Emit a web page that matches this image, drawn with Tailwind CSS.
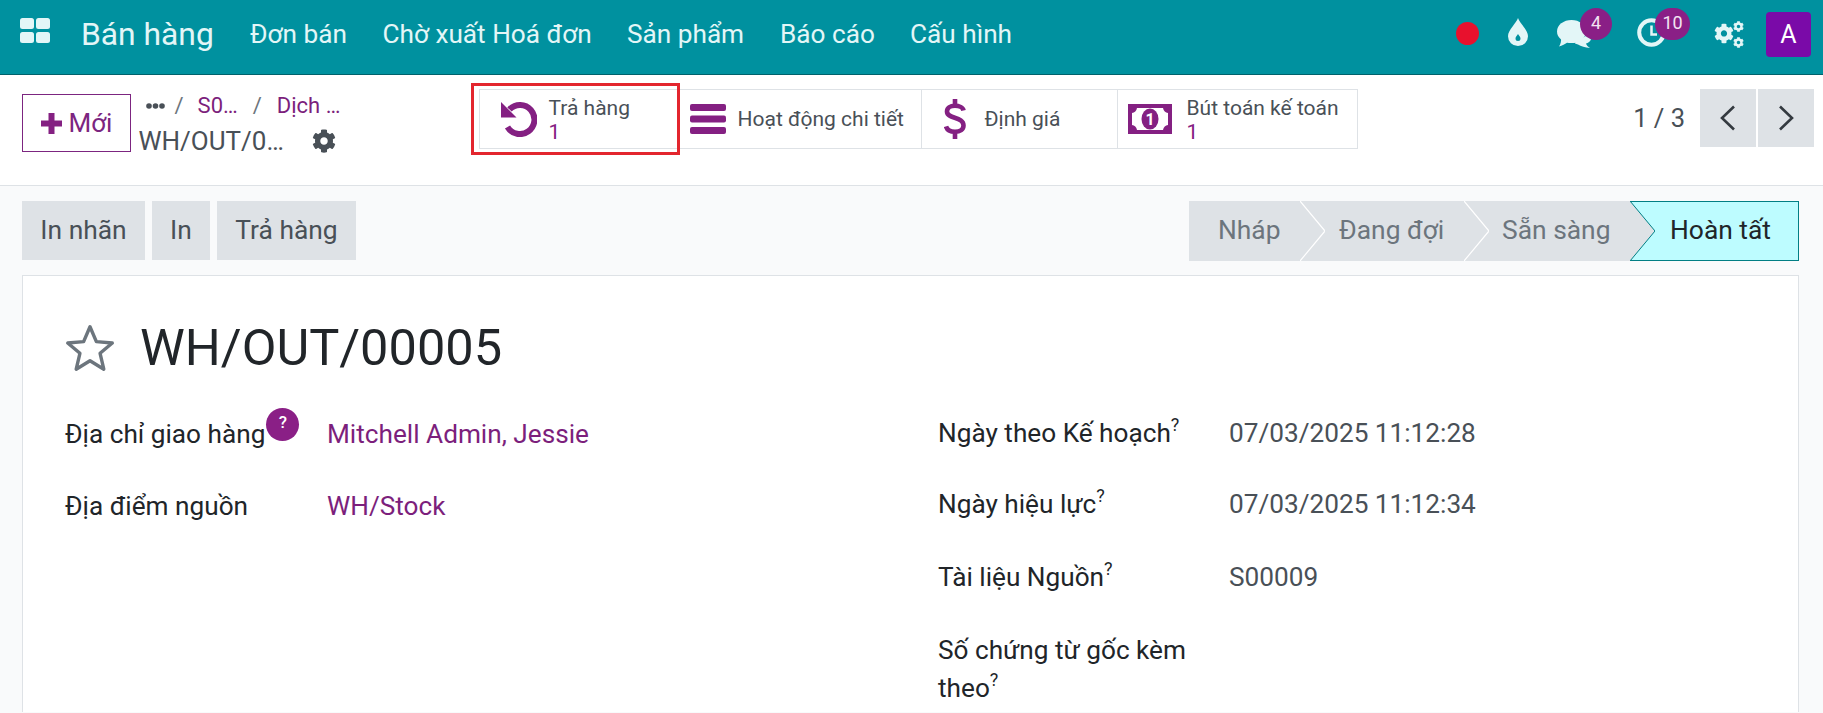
<!DOCTYPE html>
<html lang="vi">
<head>
<meta charset="utf-8">
<script src="https://cdn.jsdelivr.net/npm/@tailwindcss/browser@4"></script>
</head>
<body class="w-[1823px] h-[713px] overflow-hidden bg-[#f9fafb] font-['Roboto',sans-serif] text-[#212529]">
<!-- navbar -->
<header class="relative flex items-center h-[75px] bg-[#00919f] border-b border-[#00616b] text-[#e3f6f7]">
  <svg class="ml-[20px] w-[30px] h-[25px] mb-[13px]" viewBox="0 0 30 25" fill="#e3f6f7"><rect x="0" y="0" width="14" height="11" rx="2.5"/><rect x="16" y="0" width="14" height="11" rx="2.5"/><rect x="0" y="14" width="14" height="11" rx="2.5"/><rect x="16" y="14" width="14" height="11" rx="2.5"/></svg>
  <span class="ml-[31px] text-[31.800px] w-[169px] mb-[4px]">Bán hàng</span>
  <nav class="flex text-[26.200px] mb-[4px]">
    <span class="w-[132.5px]">Đơn bán</span>
    <span class="w-[244.5px]">Chờ xuất Hoá đơn</span>
    <span class="w-[153px]">Sản phẩm</span>
    <span class="w-[130px]">Báo cáo</span>
    <span>Cấu hình</span>
  </nav>
  <div class="absolute left-[1455.5px] top-[21.5px] w-[23px] h-[23px] rounded-full bg-[#e8112d]"></div>
  <svg class="absolute left-[1508px] top-[18px] w-[20px] h-[28px]" viewBox="0 0 20 28"><path fill="#e3f6f7" fill-rule="evenodd" d="M10 0C11.500 5 20 12 20 18.200A10 9.800 0 0 1 0 18.200C0 12 8.500 5 10 0ZM10 16C8.500 18 7.500 19.300 7.500 20.500A2.500 2.500 0 0 0 12.500 20.500C12.500 19.300 11.500 18 10 16Z"/></svg>
  <svg class="absolute left-[1557px] top-[20px] w-[34px] h-[28px]" viewBox="0 0 34 28" fill="#e3f6f7"><path d="M21 24.500C20 24 19 23.800 18 23.500L19 19C25 19 30 16 31 13C33 15 34 17 34 19C33.500 21.500 31 23 29 23.500C29.500 25 31 27 33 28C28 27.500 24 26.500 21 24.500Z"/><ellipse cx="14.500" cy="11.500" rx="14.500" ry="11.500"/><path d="M4 17L11 22C8 24 5 26 2 26.500C3.500 24.500 4.500 21 4 17Z"/></svg>
  <span class="absolute left-[1580px] top-[8px] w-[32px] h-[32px] rounded-full bg-[#8a1f86] text-[#f3e3f2] text-[18px] flex items-center justify-center pb-[3px]">4</span>
  <svg class="absolute left-[1637px] top-[18px] w-[29px] h-[29px]" viewBox="0 0 29 29" fill="none" stroke="#e3f6f7"><circle cx="14.500" cy="14.500" r="12.300" stroke-width="4"/><path d="M14.500 7.500V16.500H20" stroke-width="2.500"/></svg>
  <span class="absolute left-[1655px] top-[8px] w-[35px] h-[32px] rounded-full bg-[#8a1f86] text-[#f3e3f2] text-[18px] flex items-center justify-center pb-[3px]">10</span>
  <svg class="absolute left-[1714px] top-[21px] w-[30px] h-[27px]" viewBox="0 0 30 27" fill="#e3f6f7">
    <g transform="translate(0 2.500) scale(0.039)"><path fill-rule="evenodd" d="M487.400 315.700l-42.600-24.600c4.300-23.200 4.300-47 0-70.200l42.600-24.600c4.900-2.800 7.100-8.600 5.500-14-11.100-35.600-30-67.800-54.700-94.600-3.800-4.100-10-5.100-14.800-2.300L380.800 110c-17.900-15.400-38.500-27.300-60.800-35.100V25.800c0-5.600-3.900-10.500-9.400-11.700-36.700-8.200-74.300-7.800-109.200 0-5.500 1.200-9.400 6.100-9.400 11.700V75c-22.200 7.900-42.800 19.800-60.800 35.100L88.700 85.500c-4.900-2.800-11-1.900-14.800 2.300-24.700 26.700-43.600 58.900-54.700 94.600-1.700 5.400.6 11.200 5.500 14L67.300 221c-4.300 23.200-4.300 47 0 70.200l-42.600 24.600c-4.900 2.800-7.100 8.600-5.500 14 11.100 35.600 30 67.800 54.700 94.600 3.800 4.100 10 5.100 14.800 2.300l42.600-24.600c17.900 15.400 38.500 27.300 60.800 35.100v49.200c0 5.600 3.900 10.500 9.400 11.700 36.700 8.200 74.300 7.800 109.200 0 5.500-1.200 9.400-6.100 9.400-11.700v-49.200c22.200-7.900 42.800-19.800 60.800-35.100l42.600 24.600c4.900 2.800 11 1.900 14.800-2.300 24.700-26.700 43.600-58.900 54.700-94.600 1.500-5.500-.7-11.300-5.600-14.100zM256 336c-44.100 0-80-35.900-80-80s35.900-80 80-80 80 35.900 80 80-35.900 80-80 80z"/></g>
    <g transform="translate(19 0) scale(0.0215)"><path fill-rule="evenodd" d="M487.400 315.700l-42.600-24.600c4.300-23.200 4.300-47 0-70.200l42.600-24.600c4.900-2.800 7.100-8.600 5.500-14-11.100-35.600-30-67.800-54.700-94.600-3.800-4.100-10-5.100-14.800-2.300L380.800 110c-17.900-15.400-38.500-27.300-60.800-35.100V25.800c0-5.600-3.900-10.500-9.400-11.700-36.700-8.200-74.300-7.800-109.200 0-5.500 1.200-9.400 6.100-9.400 11.700V75c-22.200 7.900-42.800 19.800-60.800 35.100L88.700 85.500c-4.900-2.800-11-1.900-14.800 2.300-24.700 26.700-43.600 58.900-54.700 94.600-1.700 5.400.6 11.200 5.500 14L67.300 221c-4.300 23.200-4.300 47 0 70.200l-42.600 24.600c-4.900 2.800-7.100 8.600-5.500 14 11.100 35.600 30 67.800 54.700 94.600 3.800 4.100 10 5.100 14.800 2.300l42.600-24.600c17.900 15.400 38.500 27.300 60.800 35.100v49.200c0 5.600 3.900 10.500 9.400 11.700 36.700 8.200 74.300 7.800 109.200 0 5.500-1.200 9.400-6.100 9.400-11.700v-49.200c22.200-7.900 42.800-19.800 60.800-35.100l42.600 24.600c4.900 2.800 11 1.900 14.800-2.300 24.700-26.700 43.600-58.900 54.700-94.600 1.500-5.500-.7-11.300-5.600-14.100zM256 336c-44.100 0-80-35.900-80-80s35.900-80 80-80 80 35.900 80 80-35.900 80-80 80z"/></g>
    <g transform="translate(19 16) scale(0.0215)"><path fill-rule="evenodd" d="M487.400 315.700l-42.600-24.600c4.300-23.200 4.300-47 0-70.200l42.600-24.600c4.900-2.800 7.100-8.600 5.500-14-11.100-35.600-30-67.800-54.700-94.600-3.800-4.100-10-5.100-14.800-2.300L380.800 110c-17.900-15.400-38.500-27.300-60.800-35.100V25.800c0-5.600-3.900-10.500-9.400-11.700-36.700-8.200-74.300-7.800-109.200 0-5.500 1.200-9.400 6.100-9.400 11.700V75c-22.200 7.900-42.800 19.800-60.800 35.100L88.700 85.500c-4.900-2.800-11-1.900-14.800 2.300-24.700 26.700-43.600 58.900-54.700 94.600-1.700 5.400.6 11.200 5.500 14L67.300 221c-4.300 23.200-4.300 47 0 70.200l-42.600 24.600c-4.900 2.800-7.100 8.600-5.500 14 11.100 35.600 30 67.800 54.700 94.600 3.800 4.100 10 5.100 14.800 2.300l42.600-24.600c17.900 15.400 38.500 27.300 60.800 35.100v49.200c0 5.600 3.900 10.500 9.400 11.700 36.700 8.200 74.300 7.800 109.200 0 5.500-1.200 9.400-6.100 9.400-11.700v-49.200c22.200-7.900 42.800-19.800 60.800-35.100l42.600 24.600c4.900 2.800 11 1.900 14.800-2.300 24.700-26.700 43.600-58.900 54.700-94.600 1.500-5.500-.7-11.300-5.600-14.100zM256 336c-44.100 0-80-35.900-80-80s35.900-80 80-80 80 35.900 80 80-35.900 80-80 80z"/></g>
  </svg>
  <span class="absolute left-[1766px] top-[12px] w-[45px] h-[45px] rounded-[4px] bg-[#7a0aa8] text-white text-[25px] flex items-center justify-center">A</span>
</header>

<!-- control panel -->
<section class="relative flex h-[111px] bg-white border-b border-[#dee2e6]">
  <button class="ml-[22px] mt-[19px] w-[109px] h-[58px] border border-[#7c2580] text-[#7c2580] text-[26px] flex items-center justify-center gap-[7px]">
    <svg class="w-[21px] h-[21px]" viewBox="0 0 21 21" fill="#842082"><path d="M8 0H13V8H21V13H13V21H8V13H0V8H8Z" stroke="#842082" stroke-linejoin="round"/></svg>Mới
  </button>
  <div class="ml-[7.500px] w-[340px] pt-[16px] text-[22px] text-[#7c1f7c]">
    <div class="flex items-center h-[28px]">
      <svg class="ml-[7px] w-[19px] h-[6px] mt-[1px]" viewBox="0 0 19 6" fill="#495057"><circle cx="3" cy="3" r="2.800"/><circle cx="9.500" cy="3" r="2.800"/><circle cx="16" cy="3" r="2.800"/></svg>
      <span class="ml-[10px] text-[#6c757d]">/</span>
      <span class="ml-[14px]">S0…</span>
      <span class="ml-[15px] text-[#6c757d]">/</span>
      <span class="ml-[15px]">Dịch …</span>
    </div>
    <div class="flex items-center mt-[5px] text-[26px] text-[#495057] leading-[34px]">
      <span class="w-[173.500px]">WH/OUT/0…</span>
      <svg class="w-[24px] h-[24px]" viewBox="0 0 512 512" fill="#495057"><path fill-rule="evenodd" d="M487.400 315.700l-42.600-24.600c4.300-23.200 4.300-47 0-70.200l42.600-24.600c4.900-2.800 7.100-8.600 5.500-14-11.100-35.600-30-67.800-54.700-94.600-3.800-4.100-10-5.100-14.800-2.300L380.800 110c-17.900-15.400-38.500-27.300-60.800-35.100V25.800c0-5.600-3.900-10.500-9.400-11.700-36.700-8.200-74.300-7.800-109.200 0-5.500 1.200-9.400 6.100-9.400 11.700V75c-22.200 7.900-42.800 19.800-60.800 35.100L88.700 85.500c-4.900-2.800-11-1.900-14.800 2.300-24.700 26.700-43.600 58.900-54.700 94.600-1.700 5.400.6 11.200 5.500 14L67.300 221c-4.300 23.200-4.300 47 0 70.200l-42.600 24.600c-4.900 2.800-7.100 8.600-5.500 14 11.100 35.600 30 67.800 54.700 94.600 3.800 4.100 10 5.100 14.800 2.300l42.600-24.600c17.900 15.400 38.500 27.300 60.800 35.100v49.200c0 5.600 3.900 10.500 9.400 11.700 36.700 8.200 74.300 7.800 109.200 0 5.500-1.200 9.400-6.100 9.400-11.700v-49.200c22.200-7.900 42.800-19.800 60.800-35.100l42.600 24.600c4.900 2.800 11 1.900 14.800-2.300 24.700-26.700 43.600-58.900 54.700-94.600 1.500-5.500-.7-11.300-5.600-14.100zM256 336c-44.100 0-80-35.900-80-80s35.900-80 80-80 80 35.900 80 80-35.900 80-80 80z"/></svg>
    </div>
  </div>
  <!-- stat buttons -->
  <div class="mt-[14px] h-[60px] flex border border-[#dee2e6] text-[21px] leading-[24px] text-[#495057]">
    <div class="w-[199px] flex items-center border-r border-[#dee2e6] pl-[21px]">
      <svg class="w-[36px] h-[35px] shrink-0" viewBox="0 0 36 35" fill="none"><path d="M8.500 7.500A14.500 14.500 0 1 1 6.500 25" stroke="#842082" stroke-width="6"/><path d="M0 0V15.500H15.500Z" fill="#842082"/></svg>
      <div class="ml-[12px] pt-[2px]">Trả hàng<div class="text-[#842082]">1</div></div>
    </div>
    <div class="w-[243px] flex items-center border-r border-[#dee2e6] pl-[11px]">
      <svg class="w-[36px] h-[30px] shrink-0" viewBox="0 0 36 30" fill="#842082"><rect y="0" width="36" height="7" rx="2"/><rect y="11.500" width="36" height="7" rx="2"/><rect y="23" width="36" height="7" rx="2"/></svg>
      <span class="ml-[12px]">Hoạt động chi tiết</span>
    </div>
    <div class="w-[196px] flex items-center border-r border-[#dee2e6] pl-[22px]">
      <svg class="w-[22px] h-[40px] shrink-0" viewBox="0 0 22 40" fill="none" stroke="#842082"><path d="M19.500 11.500C19 8.500 15 6.800 11 6.800C6 6.800 3 9 3 12.500C3 20.500 19.500 17 19.500 26.500C19.500 30.500 16 32.800 11 32.800C6.500 32.800 3 31 2 27.500" stroke-width="4.600"/><path d="M11 0V40" stroke-width="4.600" stroke-dasharray="7 26 7"/></svg>
      <span class="ml-[19px]">Định giá</span>
    </div>
    <div class="flex-1 flex items-center pl-[10px] w-[239px]">
      <svg class="w-[44px] h-[30px] shrink-0" viewBox="0 0 44 30"><path fill="#842082" fill-rule="evenodd" d="M0 0H44V30H0ZM9 4C8.500 7 6.500 8.500 4 9V21C6.500 21.500 8.500 23 9 26H35C35.500 23 37.500 21.500 40 21V9C37.500 8.500 35.500 7 35 4Z"/><ellipse cx="22" cy="15" rx="8.500" ry="10.500" fill="#842082"/><text x="22" y="21" text-anchor="middle" font-size="16" font-weight="700" fill="#fff" font-family="Roboto">1</text></svg>
      <div class="ml-[15px] pt-[2px] whitespace-nowrap">Bút toán kế toán<div class="text-[#842082]">1</div></div>
    </div>
  </div>
  <div class="absolute left-[470.500px] top-[7.500px] w-[209px] h-[72.500px] border-[3px] border-[#e3262e] pointer-events-none"></div>
  <!-- pager -->
  <div class="ml-auto mr-[9px] mt-[14px] flex items-center h-[58px] gap-[2px] text-[#495057]">
    <span class="text-[25.500px] mr-[13px]">1 / 3</span>
    <span class="w-[56px] h-full bg-[#dee2e6] flex items-center justify-center"><svg class="w-[16px] h-[26px]" viewBox="0 0 16 26" fill="none" stroke="#343a40" stroke-width="2.600"><path d="M14 1.500L2 13L14 24.500"/></svg></span>
    <span class="w-[56px] h-full bg-[#dee2e6] flex items-center justify-center"><svg class="w-[16px] h-[26px]" viewBox="0 0 16 26" fill="none" stroke="#343a40" stroke-width="2.600"><path d="M2 1.500L14 13L2 24.500"/></svg></span>
  </div>
</section>

<!-- action row -->
<section class="flex justify-between pl-[22px] pr-[24px] pt-[15px] h-[89px]">
  <div class="flex gap-[7px] h-[59px] text-[26.400px] text-[#495057]">
    <span class="w-[123px] bg-[#dee2e6] flex items-center justify-center">In nhãn</span>
    <span class="w-[58px] bg-[#dee2e6] flex items-center justify-center">In</span>
    <span class="w-[139px] bg-[#dee2e6] flex items-center justify-center">Trả hàng</span>
  </div>
  <div class="relative flex h-[60px] text-[26.400px] text-[#6c757d]">
    <div class="relative w-[111px] bg-[#dee2e6] flex items-center pl-[29px]">Nháp
      <svg class="absolute z-10 left-full top-0 w-[25px] h-[60px]" viewBox="0 0 25 60"><path d="M0 0L25 30L0 60" fill="#dee2e6" stroke="#fff" stroke-width="1.200"/></svg></div>
    <div class="relative w-[164px] bg-[#dee2e6] flex items-center pl-[39px]">Đang đợi
      <svg class="absolute z-10 left-full top-0 w-[25px] h-[60px]" viewBox="0 0 25 60"><path d="M0 0L25 30L0 60" fill="#dee2e6" stroke="#fff" stroke-width="1.200"/></svg></div>
    <div class="relative w-[166px] bg-[#dee2e6] flex items-center pl-[38px]">Sẵn sàng
      <svg class="absolute z-10 left-full top-0 w-[25px] h-[60px]" viewBox="0 0 25 60"><path d="M0 0L25 30L0 60" fill="#dee2e6" stroke="#017e84"/></svg></div>
    <div class="w-[169px] bg-[#bdfcff] border border-[#017e84] flex items-center pl-[39px] text-[#212529]">Hoàn tất</div>
  </div>
</section>

<!-- form sheet -->
<main class="ml-[22px] mr-[24px] h-[437px] bg-white border-x border-t border-[#dee2e6] pl-[41px] text-[26.200px] leading-[37px]">
  <div class="flex items-center h-[76px] mt-[34px]">
    <svg class="w-[52px] h-[50px] shrink-0" viewBox="0 0 49 47" fill="none"><path d="M24.500 3.500L30.500 17.500L45.500 18.800L34 28.500L37.500 43.500L24.500 35.500L11.500 43.500L15 28.500L3.500 18.800L18.500 17.500Z" stroke="#6c757d" stroke-width="3.200" stroke-linejoin="round"/></svg>
    <h1 class="ml-[24px] text-[50.500px] leading-[60px]">WH/OUT/00005</h1>
  </div>
  <div class="flex mt-[30px] pl-[1px]">
    <div class="w-[873px]">
      <div class="flex h-[72px]">
        <div class="w-[262px] flex items-start">Địa chỉ giao hàng<span class="w-[33px] h-[33px] -mt-[8px] ml-[1px] rounded-full bg-[#8a1f86] text-white text-[17px] font-medium flex items-center justify-center leading-none pb-[4px]">?</span></div>
        <div class="text-[#7c1f7c]">Mitchell Admin, Jessie</div>
      </div>
      <div class="flex h-[72px]">
        <div class="w-[262px]">Địa điểm nguồn</div>
        <div class="text-[#7c1f7c]">WH/Stock</div>
      </div>
    </div>
    <div class="-mt-[1px]">
      <div class="flex h-[71px]"><div class="w-[291px]">Ngày theo Kế hoạch<sup class="text-[18px] top-[-11px]">?</sup></div><div class="text-[#495057]">07/03/2025 11:12:28</div></div>
      <div class="flex h-[73px]"><div class="w-[291px]">Ngày hiệu lực<sup class="text-[18px] top-[-11px]">?</sup></div><div class="text-[#495057]">07/03/2025 11:12:34</div></div>
      <div class="flex h-[72px]"><div class="w-[291px]">Tài liệu Nguồn<sup class="text-[18px] top-[-11px]">?</sup></div><div class="text-[#495057]">S00009</div></div>
      <div class="w-[262px] leading-[38px]">Số chứng từ gốc kèm theo<sup class="text-[18px] top-[-11px]">?</sup></div>
    </div>
  </div>
</main>
</body>
</html>
